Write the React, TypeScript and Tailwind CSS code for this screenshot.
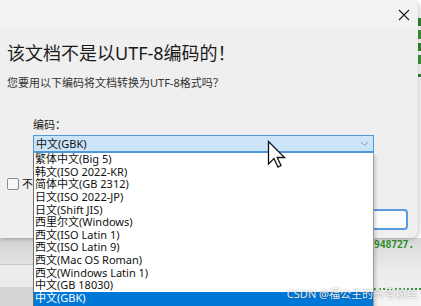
import React from "react";

const items = [
  "繁体中文(Big 5)",
  "韩文(ISO 2022-KR)",
  "简体中文(GB 2312)",
  "日文(ISO 2022-JP)",
  "日文(Shift JIS)",
  "西里尔文(Windows)",
  "西文(ISO Latin 1)",
  "西文(ISO Latin 9)",
  "西文(Mac OS Roman)",
  "西文(Windows Latin 1)",
  "中文(GB 18030)",
  "中文(GBK)",
];

export default function App() {
  return (
    <div className="relative w-[421px] h-[306px] overflow-hidden bg-white font-['Noto_Sans','Noto_Sans_CJK_SC',sans-serif]">
      {/* page behind the dialog */}
      <div className="flex flex-col h-full">
        <div className="h-[238px] bg-white flex justify-end">
          <div className="w-[3px] flex flex-col pt-[18px] gap-[4px]">
            <div className="h-[8px] bg-[#2e8b2e]" />
            <div className="h-[9px] bg-[#3a9a3a]" />
            <div className="h-[8px] bg-[#2e8b2e]" />
            <div className="h-[9px] bg-[#3a9a3a]" />
            <div className="h-[3px] mt-[6px] bg-[#2e8b2e]" />
          </div>
        </div>
        <div className="flex-1 flex">
          <div className="flex-1 flex flex-col">
            <div className="h-[27px] bg-gradient-to-b from-[#d2d2d2] to-[#e3e3e3] border-b border-[#c9c9c9]" />
            <div className="h-[22px] bg-[#ececec]" />
            <div className="flex-1 bg-[#d5d5d5]" />
          </div>
          <div className="w-[48px] bg-gradient-to-b from-[#d9d9d9] via-[#ececec] to-[#f4f4f4] flex flex-col pl-[1px]">
            <div className="text-[10px] leading-[10px] mt-[2px] font-bold text-[#2f8f2f] font-['DejaVu_Sans_Mono',monospace] tracking-[-0.3px]">
              948727.
            </div>
            <div className="mt-[38px] border-t-2 border-dotted border-[#3a9a3a] w-full" />
          </div>
        </div>
      </div>

      {/* dialog window */}
      <div className="absolute left-0 top-0 w-[418px] h-[238px] bg-[#efefef] rounded-r-[8px] shadow-[1px_1px_4px_rgba(0,0,0,0.25)] flex flex-col">
        <div className="h-[29px] bg-[#f3f3f3] rounded-tr-[8px] flex justify-end items-center pr-[8px]">
          <svg width="12" height="12" viewBox="0 0 12 12">
            <path d="M1 1 L11 11 M11 1 L1 11" stroke="#1f1f1f" strokeWidth="1.1" fill="none" />
          </svg>
        </div>
        <div className="flex flex-col px-[7px]">
          <div className="mt-[12px] text-[18px] leading-[24px] text-[#1b1b1b]">该文档不是以UTF-8编码的！</div>
          <div className="mt-[10px] text-[11px] leading-[16px] text-[#333]">您要用以下编码将文档转换为UTF-8格式吗？</div>
          <div className="mt-[26px] ml-[26px] text-[11px] leading-[16px] text-[#222]">编码：</div>
          <div className="mt-[2px] ml-[26px] w-[341px] h-[18px] bg-[#cce4f7] border border-[#4f98d9] border-b-2 flex items-center justify-between pl-[2px] pr-[4px]">
            <span className="text-[11px] leading-[14px] text-[#111]">中文(GBK)</span>
            <svg width="9" height="6" viewBox="0 0 9 6">
              <path d="M1 1 L4.5 4.5 L8 1" stroke="#8a98a8" strokeWidth="1" fill="none" />
            </svg>
          </div>
          <div className="mt-[25px] flex items-center gap-[3px]">
            <div className="w-[12px] h-[12px] rounded-[2px] border border-[#8a8a8a] bg-[#f7f7f7]" />
            <span className="text-[11px] leading-[12px] text-[#222]">不再提示</span>
          </div>
          <div className="mt-[19px] flex justify-end pr-[3px]">
            <div className="w-[90px] h-[21px] rounded-[4px] border-2 border-[#5a9be0] bg-[#fdfdfd]" />
          </div>
        </div>
      </div>

      {/* dropdown list */}
      <div className="absolute left-[33px] top-[153px] w-[341px] h-[160px] bg-white border-l border-[#6d6d6d] border-r border-r-[#9a9a9a] shadow-[2px_2px_3px_rgba(0,0,0,0.15)] flex flex-col">
        {items.map((t, i) => (
          <div
            key={t}
            className={
              i === items.length - 1
                ? "h-[12.64px] leading-[12.64px] text-[11px] pl-[1px] bg-[#0078d7] text-white"
                : "h-[12.64px] leading-[12.64px] text-[11px] pl-[1px] text-[#111]"
            }
          >
            {t}
          </div>
        ))}
        <div className="flex-1 bg-[#0078d7]" />
      </div>

      {/* watermark */}
      <div className="absolute right-[4px] top-[288px] text-[11px] leading-[12px] text-white/90 [text-shadow:0_0_2px_rgba(0,0,0,0.45)]">
        CSDN @福公主的头号粉丝
      </div>

      {/* mouse cursor */}
      <svg className="absolute left-[267px] top-[140px]" width="20" height="29" viewBox="0 0 20 29">
        <path
          d="M1.5 1.5 L1.5 24 L7 18.5 L11 27 L14 25.5 L10.2 17.5 L17.5 17.5 Z"
          fill="white"
          stroke="#111"
          strokeWidth="1.3"
          strokeLinejoin="miter"
        />
      </svg>
    </div>
  );
}
